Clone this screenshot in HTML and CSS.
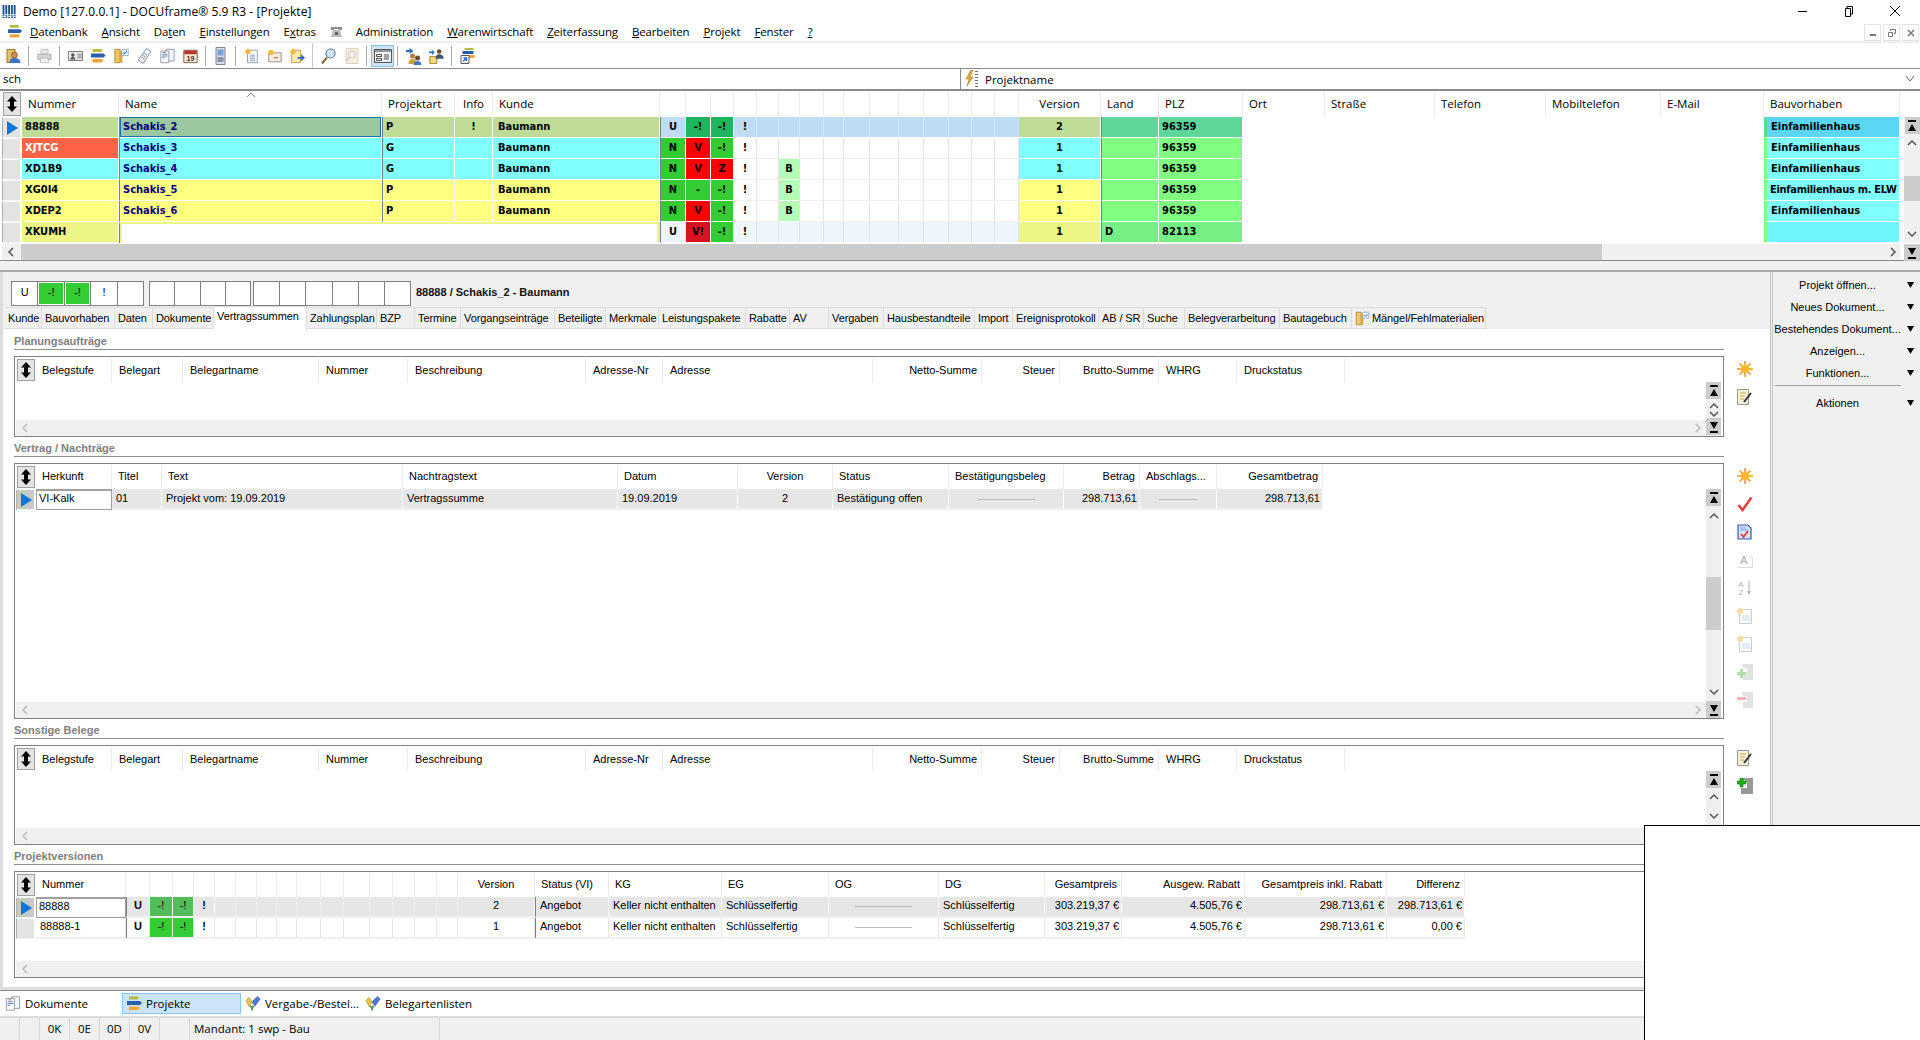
FILE: index.html
```html
<!DOCTYPE html>
<html lang="de">
<head>
  <meta charset="UTF-8">
  <title>DOCUframe</title>
  <link rel="stylesheet" href="styles.css">
</head>
<body>
  <svg class="defs" width="0" height="0">
    <symbol id="i-app" viewBox="0 0 16 14"><path fill="#1f4e8c" d="M0 0h2v14H0zM3 0h2v14H3zM6 0h2v14H6zM9 0h2v14H9zM12 0h2v14h-2z"/><path fill="#fff" d="M0 10h14v1H0zM0 12h14v1H0z"/><path fill="#1f4e8c" d="M1 10h1v1H1zM4 12h1v1H4zM7 10h1v1H7zM10 12h1v1h-1z"/></symbol>
    <symbol id="i-bars" viewBox="0 0 16 16"><path fill="#b4bc46" d="M2 1h9l1 1.500-1 1.500H2z"/><path fill="#2a5ea8" d="M0 5.500h13l2 2-2 2H0z"/><path fill="#eda63a" d="M2 11h9l2 1.500-2 2H2z"/></symbol>
    <symbol id="i-dbuser" viewBox="0 0 16 18"><path fill="#e4c060" stroke="#a07820" d="M1.500 2.500h8v13h-8z"/><circle cx="9" cy="8" r="3" fill="#c98d5a" stroke="#6e4a2a" stroke-width=".6"/><path fill="#3f74c4" d="M4 16c0-4 2-5 5-5s6 1 6 5z"/></symbol>
    <symbol id="i-print" viewBox="0 0 18 18"><path fill="#e6e6e6" stroke="#bbb" d="M5 1.500h8v5H5z"/><path fill="#d4d4d4" stroke="#b0b0b0" d="M1.500 7h15v6h-15z"/><path fill="#f2f2f2" stroke="#bbb" d="M4.500 11.500h9v5h-9z"/></symbol>
    <symbol id="i-card" viewBox="0 0 18 16"><path fill="#eee" stroke="#666" d="M1 3h16v10H1z"/><circle cx="6" cy="7" r="2" fill="#555"/><path fill="#555" d="M3 12c0-2 1-3 3-3s3 1 3 3z"/><path stroke="#777" d="M11 6h5M11 8h5M11 10h5"/></symbol>
    <symbol id="i-folder" viewBox="0 0 18 18"><path fill="#eec968" stroke="#b08a30" d="M1.500 1.500h6v15h-6z"/><path fill="#d8a83c" d="M7 3l3 1v13l-3-1z"/><path fill="#fff" stroke="#8aa6c8" d="M9.500 1.500h7v7h-7z"/><path fill="none" stroke="#2f6fb8" stroke-width="1.200" d="M11 5l1.500 1.500 2.500-3"/></symbol>
    <symbol id="i-tag" viewBox="0 0 16 18"><path fill="#eef0f4" stroke="#8b93a0" d="M10 1.500l4.500 3-8 12-5-3.500z"/><path stroke="#8b93a0" d="M5 10l3 2M6 8l3 2M7.500 6l3 2"/></symbol>
    <symbol id="i-docs" viewBox="0 0 18 18"><path fill="#f4f6fa" stroke="#8a94a6" d="M7.500 1.500h9v13h-9z"/><path fill="#fff" stroke="#8a94a6" d="M1.500 3.500h9v13h-9z"/><path stroke="#4f7dc0" d="M3 7h6M3 9h6M3 11h3"/><path stroke="#c05030" d="M4 5h3"/></symbol>
    <symbol id="i-phone" viewBox="0 0 12 18"><path fill="#d6dce6" stroke="#7c8696" d="M1.500 .500h9v17h-9z"/><path fill="#7ca4d8" d="M3 2.500h6v6H3z"/><path fill="#8a94a6" d="M3 10h6v5H3z"/></symbol>
    <symbol id="i-docstar" viewBox="0 0 18 18"><path fill="#fff" stroke="#8a94a6" d="M4.500 2.500h11v14h-11z"/><path stroke="#7f9cc8" d="M7 8h6M7 10h6M7 12h6M7 14h6"/><circle cx="5" cy="4" r="3" fill="#f6b93c"/></symbol>
    <symbol id="i-mailstar" viewBox="0 0 18 18"><path fill="#f6eedc" stroke="#8a8a8a" d="M2.500 5.500h14v10h-14z"/><path stroke="#b04040" d="M8 11h5"/><circle cx="5" cy="5" r="3" fill="#f6b93c"/></symbol>
    <symbol id="i-docgo" viewBox="0 0 18 18"><path fill="#fbeeb0" stroke="#b49a40" d="M2.500 2.500h10v14h-10z"/><circle cx="4" cy="4" r="3" fill="#f6b93c"/><path fill="#2a6fc9" d="M9 10h4V7l4.500 4-4.500 4v-3H9z"/></symbol>
    <symbol id="i-find" viewBox="0 0 16 18"><circle cx="10" cy="6.500" r="4.500" fill="#cfe4f8" stroke="#66788c" stroke-width="1.200"/><path stroke="#8a6a3a" stroke-width="2" d="M6.500 10.500L1.500 16.500"/></symbol>
    <symbol id="i-findoff" viewBox="0 0 16 18"><path fill="#f7efdd" stroke="#ddd2bc" d="M2.500 1.500h12v15h-12z"/><circle cx="8.500" cy="7.500" r="3.500" fill="#f3f3f3" stroke="#ccc"/><path stroke="#ccc" stroke-width="1.500" d="M6 10l-3 4"/></symbol>
    <symbol id="i-view" viewBox="0 0 18 16"><path fill="#f2f2f2" stroke="#555" d="M.500 1.500h17v13H.500z"/><path fill="#999" d="M1 2h16v2H1z"/><path fill="none" stroke="#555" d="M2.500 6.500h5v2h-5zM2.500 10.500h5v2h-5zM10 7h5M10 9h5M10 11h5"/></symbol>
    <symbol id="i-people" viewBox="0 0 16 18"><path fill="#2a6fc9" d="M0 3h4V1l4 3-4 3V5H0z"/><circle cx="7" cy="9" r="2.500" fill="#b07a4a"/><path fill="#caa040" d="M3 17c0-4 2-5 4-5s4 1 4 5z"/><circle cx="12" cy="11" r="2.500" fill="#6e4a2a"/><path fill="#3f74c4" d="M8 18c0-3 2-4 4-4s4 1 4 4z"/></symbol>
    <symbol id="i-peoplego" viewBox="0 0 18 18"><path fill="#2a6fc9" d="M0 4h4V2l3 3-3 3V6H0z"/><path fill="#f2d67a" stroke="#9c8030" d="M1.500 9.500h8v8h-8z"/><circle cx="12" cy="4" r="2.500" fill="#6e4a2a"/><path fill="#3f4f70" d="M8 12c0-4 2-5 4-5s5 1 5 5z"/></symbol>
    <symbol id="i-barslink" viewBox="0 0 16 18"><path fill="#b4bc46" d="M5 1h9v2H5z"/><path fill="#2a5ea8" d="M3 4h11v3H3z"/><path fill="#eda63a" d="M9 8h6v3H9z"/><path fill="#fff" stroke="#555" d="M1.500 8.500h8v8h-8z"/><path stroke="#2a6fc9" stroke-width="1.500" fill="none" d="M3.500 14.500l3-3M4 11h3v3"/></symbol>
    <symbol id="i-lightning" viewBox="0 0 14 18"><path fill="#e8a838" stroke="#9a6a20" stroke-width=".5" d="M6 0L1 9h3l-2 7 6-9H5l3-7z"/><path fill="#777" d="M10 1h3v1h-3zM10 4h3v1h-3zM10 7h3v1h-3zM10 10h3v1h-3zM10 13h3v1h-3zM10 16h3v1h-3z"/></symbol>
    <symbol id="i-updown" viewBox="0 0 12 18"><path fill="#000" d="M6 1l5 5.500H8v5h3L6 17l-5-5.500h3v-5H1z"/></symbol>
    <symbol id="i-cur" viewBox="0 0 14 16"><path fill="#0a78d8" d="M2 1l11 7-11 7z"/></symbol>
    <symbol id="i-first" viewBox="0 0 10 12"><path fill="#000" d="M1 0h8v2H1zM5 4l4 7H1z"/></symbol>
    <symbol id="i-last" viewBox="0 0 10 12"><path fill="#000" d="M1 10h8v2H1zM5 8L1 1h8z"/></symbol>
    <symbol id="i-star" viewBox="0 0 16 16"><path stroke="#f59a0c" stroke-width="1.500" d="M8 0v16M0 8h16M2.500 2.500l11 11M13.500 2.500l-11 11"/><circle cx="8" cy="8" r="4" fill="#fbb82c"/></symbol>
    <symbol id="i-note" viewBox="0 0 16 16"><path fill="#f6f0d8" stroke="#999" d="M.500 .500h11v15H.500z"/><path stroke="#c8a84c" d="M3 4h6M3 7h5M3 10h4"/><path stroke="#333" stroke-width="2" d="M7 13l7-9"/></symbol>
    <symbol id="i-check" viewBox="0 0 16 16"><path fill="none" stroke="#ee3b3b" stroke-width="2.500" d="M1.500 9l4 5L14.500 1.500"/></symbol>
    <symbol id="i-doccheck" viewBox="0 0 16 16"><path fill="#cfe3fa" stroke="#3b5aa8" stroke-width="1.200" d="M1 1h10l3 3v11H1z"/><path stroke="#7aa0d8" d="M3 4h6M3 6h8"/><path fill="none" stroke="#ee3b3b" stroke-width="1.800" d="M4 10l2.500 3L11 7"/></symbol>
    <symbol id="i-docoff" viewBox="0 0 16 16"><path fill="#fff" stroke="#ccc" d="M2.500 1.500h12v14h-12z"/><path stroke="#cdd8e8" d="M5 8h8M5 10h8M5 12h8"/><circle cx="3" cy="3" r="3" fill="#f8dca0"/></symbol>
    <symbol id="i-plusoff" viewBox="0 0 16 16"><path stroke="#c6c6c6" d="M5 1h11M6 3h10M10 5h6M10 7h6M10 9h6M6 11h10M6 13h10M6 15h10"/><path fill="#b4e0a8" d="M3 5h3v3h3v3H6v3H3v-3H0V8h3z"/></symbol>
    <symbol id="i-minusoff" viewBox="0 0 16 16"><path stroke="#c6c6c6" d="M5 1h11M6 3h10M10 5h6M10 7h6M10 9h6M6 11h10M6 13h10M6 15h10"/><path fill="#f6b4b8" d="M0 5h9v3H0z"/></symbol>
    <symbol id="i-plus" viewBox="0 0 16 16"><path stroke="#333" d="M5 1h11M8 3h8M10 5h6M10 7h6M10 9h6M4 11h12M4 13h12M4 15h12"/><path fill="#1cae1c" stroke="#0a7a0a" stroke-width=".6" d="M3 0h3v3h3v3H6v3H3V6H0V3h3z"/></symbol>
    <symbol id="i-gems" viewBox="0 0 18 18"><path fill="#e8c84c" stroke="#907818" stroke-width=".6" d="M1 6l3-4 4 5-3 6z"/><path fill="#4a78d8" stroke="#28468c" stroke-width=".6" d="M8 7l6-6 3 3-6 8z"/><path fill="#5cae5c" stroke="#2a6e2a" stroke-width=".6" d="M6 12l4 0-2 5z"/></symbol>
  </svg>

  <div class="titlebar">
    <svg class="app-ico"><use href="#i-app"/></svg>
    <span class="title-text">Demo [127.0.0.1] - DOCUframe® 5.9 R3 - [Projekte]</span>
    <div class="win-btns">
      <svg width="12" height="12"><path stroke="#000" d="M1 6.500h9"/></svg>
      <svg width="12" height="12"><path fill="none" stroke="#000" d="M2.500 3.500h5v8h-5zM4 3V1.500h5.500V9H8"/></svg>
      <svg width="12" height="12"><path stroke="#000" d="M1 1l10 10M11 1L1 11"/></svg>
    </div>
  </div>

  <div class="menubar">
    <svg class="menu-ico"><use href="#i-bars"/></svg>
    <span class="mi m-first"><u>D</u>atenbank</span>
    <span class="mi"><u>A</u>nsicht</span>
    <span class="mi">Da<u>t</u>en</span>
    <span class="mi"><u>E</u>instellungen</span>
    <span class="mi">E<u>x</u>tras</span>
    <svg class="mi-phone" width="13" height="13" viewBox="0 0 13 13"><path fill="#8a8f96" d="M1 2h11v3H9V4H4v1H1z"/><path fill="#b8bcc2" d="M3 5h7l2 7H1z"/><path fill="#666" d="M5 7h3v3H5z"/></svg>
    <span class="mi">Administration</span>
    <span class="mi"><u>W</u>arenwirtschaft</span>
    <span class="mi"><u>Z</u>eiterfassung</span>
    <span class="mi"><u>B</u>earbeiten</span>
    <span class="mi"><u>P</u>rojekt</span>
    <span class="mi"><u>F</u>enster</span>
    <span class="mi"><u>?</u></span>
    <div class="mdi-btns">
      <span class="mdi"><svg width="8" height="8"><path stroke="#777" stroke-width="2" d="M1 6h6"/></svg></span>
      <span class="mdi"><svg width="8" height="8"><path fill="none" stroke="#777" d="M.500 3.500h4v4h-4zM2.500 2V.500h5v4H6"/></svg></span>
      <span class="mdi"><svg width="8" height="8"><path stroke="#777" stroke-width="1.500" d="M1 1l6 6M7 1L1 7"/></svg></span>
    </div>
  </div>

  <div class="toolbar">
    <svg class="tb"><use href="#i-dbuser"/></svg>
    <span class="sep"></span>
    <svg class="tb"><use href="#i-print"/></svg>
    <span class="sep"></span>
    <svg class="tb"><use href="#i-card"/></svg>
    <svg class="tb"><use href="#i-bars"/></svg>
    <svg class="tb"><use href="#i-folder"/></svg>
    <svg class="tb"><use href="#i-tag"/></svg>
    <svg class="tb"><use href="#i-docs"/></svg>
    <svg class="tb" viewBox="0 0 18 18"><path fill="#f3ead8" stroke="#6a5030" d="M1.500 2.500h15v14h-15z"/><path fill="#b8352e" d="M2 3h14v4H2z"/><text x="9" y="15" font-family="Liberation Sans" font-size="8" font-weight="bold" text-anchor="middle" fill="#333">19</text></svg>
    <span class="sep sep-n"></span>
    <svg class="tb"><use href="#i-phone"/></svg>
    <span class="sep"></span>
    <svg class="tb"><use href="#i-docstar"/></svg>
    <svg class="tb"><use href="#i-mailstar"/></svg>
    <svg class="tb"><use href="#i-docgo"/></svg>
    <span class="sep sep-tall"></span>
    <svg class="tb"><use href="#i-find"/></svg>
    <svg class="tb"><use href="#i-findoff"/></svg>
    <span class="sep"></span>
    <span class="tb-on"><svg class="tb-in"><use href="#i-view"/></svg></span>
    <span class="sep"></span>
    <svg class="tb"><use href="#i-people"/></svg>
    <svg class="tb"><use href="#i-peoplego"/></svg>
    <span class="sep"></span>
    <svg class="tb"><use href="#i-barslink"/></svg>
  </div>

  <div class="searchrow">
    <div class="search-input">sch</div>
    <div class="search-combo">
      <svg class="combo-ico"><use href="#i-lightning"/></svg>
      <span>Projektname</span>
      <svg class="combo-arrow" width="10" height="8"><path fill="none" stroke="#666" d="M1 1l4 5 4-5"/></svg>
    </div>
  </div>

  <div class="topgrid">
    <div class="t-cols t-head">
      <div class="updown"><svg><use href="#i-updown"/></svg></div>
      <div class="th">Nummer</div>
      <div class="th th-sort">Name<svg class="sort-ico" width="10" height="5"><path fill="none" stroke="#888" d="M1 5l4-4 4 4"/></svg></div>
      <div class="th">Projektart</div>
      <div class="th mid">Info</div>
      <div class="th">Kunde</div>
      <div class="th"></div><div class="th"></div><div class="th"></div><div class="th"></div><div class="th"></div><div class="th"></div>
      <div class="th"></div><div class="th"></div><div class="th"></div><div class="th"></div><div class="th"></div><div class="th"></div><div class="th"></div><div class="th"></div><div class="th"></div>
      <div class="th mid">Version</div>
      <div class="th">Land</div>
      <div class="th">PLZ</div>
      <div class="th">Ort</div>
      <div class="th">Straße</div>
      <div class="th">Telefon</div>
      <div class="th">Mobiltelefon</div>
      <div class="th">E-Mail</div>
      <div class="th">Bauvorhaben</div>
    </div>
    <div class="t-body">
      <div class="t-rows">
        <div class="t-cols t-row">
          <div class="rh rh-cur"><svg><use href="#i-cur"/></svg></div>
          <div class="c bg-sel">88888</div>
          <div class="c name bg-focus dl">Schakis_2</div>
          <div class="c bg-sel dl">P</div>
          <div class="c bg-sel mid">!</div>
          <div class="c kd bg-sel">Baumann</div>
          <div class="c bg-blue mid dl">U</div>
          <div class="c bg-dgrn mid">-!</div>
          <div class="c bg-dgrn mid">-!</div>
          <div class="c bg-blue mid">!</div>
          <div class="c bg-blue"></div><div class="c bg-blue"></div>
          <div class="c bg-blue"></div><div class="c bg-blue"></div><div class="c bg-blue"></div><div class="c bg-blue"></div><div class="c bg-blue"></div><div class="c bg-blue"></div><div class="c bg-blue"></div><div class="c bg-blue"></div><div class="c bg-blue"></div>
          <div class="c bg-sel mid">2</div>
          <div class="c bg-mint dl"></div>
          <div class="c bg-mint">96359</div>
          <div class="blank"></div>
          <div class="c bau bg-sky edge-mint">Einfamilienhaus</div>
        </div>
        <div class="t-cols t-row">
          <div class="rh"></div>
          <div class="c bg-tom">XJTCG</div>
          <div class="c name bg-cyan dl">Schakis_3</div>
          <div class="c bg-cyan dl">G</div>
          <div class="c bg-cyan"></div>
          <div class="c kd bg-cyan">Baumann</div>
          <div class="c bg-grn mid dl">N</div>
          <div class="c bg-red mid">V</div>
          <div class="c bg-grn mid">-!</div>
          <div class="c gl mid">!</div>
          <div class="c gl"></div><div class="c gl"></div>
          <div class="c gl"></div><div class="c gl"></div><div class="c gl"></div><div class="c gl"></div><div class="c gl"></div><div class="c gl"></div><div class="c gl"></div><div class="c gl"></div><div class="c gl"></div>
          <div class="c bg-cyan mid">1</div>
          <div class="c bg-lime dl"></div>
          <div class="c bg-lime">96359</div>
          <div class="blank"></div>
          <div class="c bau bg-cyan edge-lime">Einfamilienhaus</div>
        </div>
        <div class="t-cols t-row">
          <div class="rh"></div>
          <div class="c bg-cyan">XD1B9</div>
          <div class="c name bg-cyan dl">Schakis_4</div>
          <div class="c bg-cyan dl">G</div>
          <div class="c bg-cyan"></div>
          <div class="c kd bg-cyan">Baumann</div>
          <div class="c bg-grn mid dl">N</div>
          <div class="c bg-red mid">V</div>
          <div class="c bg-red mid">Z</div>
          <div class="c gl mid">!</div>
          <div class="c gl"></div><div class="c bg-pale mid">B</div>
          <div class="c gl"></div><div class="c gl"></div><div class="c gl"></div><div class="c gl"></div><div class="c gl"></div><div class="c gl"></div><div class="c gl"></div><div class="c gl"></div><div class="c gl"></div>
          <div class="c bg-cyan mid">1</div>
          <div class="c bg-lime dl"></div>
          <div class="c bg-lime">96359</div>
          <div class="blank"></div>
          <div class="c bau bg-cyan edge-lime">Einfamilienhaus</div>
        </div>
        <div class="t-cols t-row">
          <div class="rh"></div>
          <div class="c bg-yel">XG0I4</div>
          <div class="c name bg-yel dl">Schakis_5</div>
          <div class="c bg-yel dl">P</div>
          <div class="c bg-yel"></div>
          <div class="c kd bg-yel">Baumann</div>
          <div class="c bg-grn mid dl">N</div>
          <div class="c bg-grn mid">-</div>
          <div class="c bg-grn mid">-!</div>
          <div class="c gl mid">!</div>
          <div class="c gl"></div><div class="c bg-pale mid">B</div>
          <div class="c gl"></div><div class="c gl"></div><div class="c gl"></div><div class="c gl"></div><div class="c gl"></div><div class="c gl"></div><div class="c gl"></div><div class="c gl"></div><div class="c gl"></div>
          <div class="c bg-yel mid">1</div>
          <div class="c bg-lime dl"></div>
          <div class="c bg-lime">96359</div>
          <div class="blank"></div>
          <div class="c bau bau-long bg-cyan edge-lime">Einfamilienhaus m. ELW</div>
        </div>
        <div class="t-cols t-row">
          <div class="rh"></div>
          <div class="c bg-yel">XDEP2</div>
          <div class="c name bg-yel dl">Schakis_6</div>
          <div class="c bg-yel dl">P</div>
          <div class="c bg-yel"></div>
          <div class="c kd bg-yel">Baumann</div>
          <div class="c bg-grn mid dl">N</div>
          <div class="c bg-red mid">V</div>
          <div class="c bg-grn mid">-!</div>
          <div class="c gl mid">!</div>
          <div class="c gl"></div><div class="c bg-pale mid">B</div>
          <div class="c gl"></div><div class="c gl"></div><div class="c gl"></div><div class="c gl"></div><div class="c gl"></div><div class="c gl"></div><div class="c gl"></div><div class="c gl"></div><div class="c gl"></div>
          <div class="c bg-yel mid">1</div>
          <div class="c bg-lime dl"></div>
          <div class="c bg-lime">96359</div>
          <div class="blank"></div>
          <div class="c bau bg-cyan edge-lime">Einfamilienhaus</div>
        </div>
        <div class="t-cols t-row">
          <div class="rh"></div>
          <div class="c bg-olive">XKUMH</div>
          <div class="c editing dl"></div>
          <div class="c bg-ice mid dl">U</div>
          <div class="c bg-crim mid">V!</div>
          <div class="c bg-grn mid">-!</div>
          <div class="c bg-ice mid">!</div>
          <div class="c bg-ice"></div><div class="c bg-ice"></div>
          <div class="c bg-ice"></div><div class="c bg-ice"></div><div class="c bg-ice"></div><div class="c bg-ice"></div><div class="c bg-ice"></div><div class="c bg-ice"></div><div class="c bg-ice"></div><div class="c bg-ice"></div><div class="c bg-ice"></div>
          <div class="c bg-olive mid">1</div>
          <div class="c bg-spring dl">D</div>
          <div class="c bg-spring">82113</div>
          <div class="blank"></div>
          <div class="c bau bg-aqua edge-lime"></div>
        </div>
      </div>
      <div class="vs vs-top">
        <span class="vs-btn"><svg width="10" height="12"><use href="#i-first"/></svg></span>
        <svg class="vs-arrow" width="10" height="7"><path fill="none" stroke="#555" stroke-width="1.500" d="M1 6l4-4 4 4"/></svg>
        <span class="vs-thumb"></span>
        <svg class="vs-arrow vs-down" width="10" height="7"><path fill="none" stroke="#555" stroke-width="1.500" d="M1 1l4 4 4-4"/></svg>
      </div>
    </div>
    <div class="t-hscroll">
      <div class="hs">
        <svg class="hs-left" width="7" height="10"><path fill="none" stroke="#555" stroke-width="1.500" d="M6 1L2 5l4 4"/></svg>
        <span class="hs-thumb"></span>
        <svg class="hs-right" width="7" height="10"><path fill="none" stroke="#555" stroke-width="1.500" d="M1 1l4 4-4 4"/></svg>
      </div>
      <span class="vs-btn"><svg width="10" height="12"><use href="#i-last"/></svg></span>
    </div>
  </div>

  <div class="split-top"></div>

  <div class="workspace">
    <div class="work">
      <div class="statusline">
        <div class="sgroup sg-a">
          <span class="sb">U</span><span class="sb sb-grn">-!</span><span class="sb sb-grn">-!</span><span class="sb">!</span><span class="sb"></span>
        </div>
        <div class="sgroup sg-b">
          <span class="sb"></span><span class="sb"></span><span class="sb"></span><span class="sb"></span>
        </div>
        <div class="sgroup sg-c">
          <span class="sb"></span><span class="sb"></span><span class="sb"></span><span class="sb"></span><span class="sb"></span><span class="sb"></span>
        </div>
        <span class="record">88888 / Schakis_2 - Baumann</span>
      </div>
      <div class="tabs">
        <span class="tab">Kunde</span>
        <span class="tab">Bauvorhaben</span>
        <span class="tab">Daten</span>
        <span class="tab">Dokumente</span>
        <span class="tab tab-on">Vertragssummen</span>
        <span class="tab">Zahlungsplan</span>
        <span class="tab">BZP</span>
        <span class="tab">Termine</span>
        <span class="tab">Vorgangseinträge</span>
        <span class="tab">Beteiligte</span>
        <span class="tab">Merkmale</span>
        <span class="tab">Leistungspakete</span>
        <span class="tab">Rabatte</span>
        <span class="tab">AV</span>
        <span class="tab">Vergaben</span>
        <span class="tab">Hausbestandteile</span>
        <span class="tab">Import</span>
        <span class="tab">Ereignisprotokoll</span>
        <span class="tab">AB / SR</span>
        <span class="tab">Suche</span>
        <span class="tab">Belegverarbeitung</span>
        <span class="tab">Bautagebuch</span>
        <span class="tab tab-ico"><svg width="15" height="17"><use href="#i-folder"/></svg>Mängel/Fehlmaterialien</span>
      </div>

      <div class="panel">
        <div class="sec sec-1">
          <div class="sec-title">Planungsaufträge</div>
          <div class="box">
            <div class="grid-a gh">
              <div class="updown"><svg><use href="#i-updown"/></svg></div>
              <div class="gth">Belegstufe</div><div class="gth">Belegart</div><div class="gth">Belegartname</div><div class="gth">Nummer</div><div class="gth">Beschreibung</div><div class="gth">Adresse-Nr</div><div class="gth">Adresse</div>
              <div class="gth r">Netto-Summe</div><div class="gth r">Steuer</div><div class="gth r">Brutto-Summe</div><div class="gth">WHRG</div><div class="gth">Druckstatus</div>
            </div>
            <div class="box-body">
              <div class="box-left">
                <div class="box-rows"></div>
                <div class="hs hs-off">
                  <svg class="hs-left" width="7" height="10"><path fill="none" stroke="#bbb" stroke-width="1.500" d="M6 1L2 5l4 4"/></svg>
                  <svg class="hs-right" width="7" height="10"><path fill="none" stroke="#bbb" stroke-width="1.500" d="M1 1l4 4-4 4"/></svg>
                </div>
              </div>
              <div class="vs vs-tight">
                <span class="vs-btn"><svg width="10" height="12"><use href="#i-first"/></svg></span>
                <svg class="vs-arrow" width="10" height="7"><path fill="none" stroke="#555" stroke-width="1.500" d="M1 6l4-4 4 4"/></svg>
                <svg class="vs-arrow vs-down" width="10" height="7"><path fill="none" stroke="#555" stroke-width="1.500" d="M1 1l4 4 4-4"/></svg>
                <span class="vs-btn"><svg width="10" height="12"><use href="#i-last"/></svg></span>
              </div>
            </div>
          </div>
          <div class="tools">
            <svg><use href="#i-star"/></svg>
            <svg><use href="#i-note"/></svg>
          </div>
        </div>

        <div class="sec sec-2">
          <div class="sec-title">Vertrag / Nachträge</div>
          <div class="box">
            <div class="grid-b gh">
              <div class="updown"><svg><use href="#i-updown"/></svg></div>
              <div class="gth">Herkunft</div><div class="gth">Titel</div><div class="gth">Text</div><div class="gth">Nachtragstext</div><div class="gth">Datum</div><div class="gth mid">Version</div><div class="gth">Status</div><div class="gth">Bestätigungsbeleg</div><div class="gth r">Betrag</div><div class="gth">Abschlags...</div><div class="gth r">Gesamtbetrag</div>
            </div>
            <div class="box-body">
              <div class="box-left">
                <div class="box-rows">
                  <div class="grid-b gr gr-on">
                    <div class="rh rh-dark"><svg><use href="#i-cur"/></svg></div>
                    <div class="gc gc-cur">VI-Kalk</div><div class="gc">01</div><div class="gc">Projekt vom: 19.09.2019</div><div class="gc">Vertragssumme</div><div class="gc">19.09.2019</div><div class="gc mid">2</div><div class="gc">Bestätigung offen</div><div class="gc mid"><span class="dash"></span></div><div class="gc r">298.713,61</div><div class="gc mid"><span class="dash dash-s"></span></div><div class="gc r">298.713,61</div>
                  </div>
                </div>
                <div class="hs hs-off">
                  <svg class="hs-left" width="7" height="10"><path fill="none" stroke="#bbb" stroke-width="1.500" d="M6 1L2 5l4 4"/></svg>
                  <svg class="hs-right" width="7" height="10"><path fill="none" stroke="#bbb" stroke-width="1.500" d="M1 1l4 4-4 4"/></svg>
                </div>
              </div>
              <div class="vs vs-long">
                <span class="vs-btn"><svg width="10" height="12"><use href="#i-first"/></svg></span>
                <svg class="vs-arrow" width="10" height="7"><path fill="none" stroke="#555" stroke-width="1.500" d="M1 6l4-4 4 4"/></svg>
                <span class="vs-thumb"></span>
                <svg class="vs-arrow vs-down" width="10" height="7"><path fill="none" stroke="#555" stroke-width="1.500" d="M1 1l4 4 4-4"/></svg>
                <span class="vs-btn"><svg width="10" height="12"><use href="#i-last"/></svg></span>
              </div>
            </div>
          </div>
          <div class="tools">
            <svg><use href="#i-star"/></svg>
            <svg><use href="#i-check"/></svg>
            <svg><use href="#i-doccheck"/></svg>
            <svg viewBox="0 0 16 16"><text x="7" y="12" font-family="Liberation Sans" font-size="11" text-anchor="middle" fill="#aaa">A</text><path fill="none" stroke="#ddd" d="M.500 15.500h15V6l-3-3"/></svg>
            <svg viewBox="0 0 16 16"><text x="4" y="7" font-family="Liberation Sans" font-size="8" text-anchor="middle" fill="#b4b4b4">A</text><text x="4" y="15" font-family="Liberation Sans" font-size="8" text-anchor="middle" fill="#b4b4b4">Z</text><path stroke="#b4b4b4" d="M12 1v13"/><path fill="#b4b4b4" d="M12 15l-2-4h4z"/></svg>
            <svg><use href="#i-docoff"/></svg>
            <svg><use href="#i-docoff"/></svg>
            <svg><use href="#i-plusoff"/></svg>
            <svg><use href="#i-minusoff"/></svg>
          </div>
        </div>

        <div class="sec sec-3">
          <div class="sec-title">Sonstige Belege</div>
          <div class="box">
            <div class="grid-a gh">
              <div class="updown"><svg><use href="#i-updown"/></svg></div>
              <div class="gth">Belegstufe</div><div class="gth">Belegart</div><div class="gth">Belegartname</div><div class="gth">Nummer</div><div class="gth">Beschreibung</div><div class="gth">Adresse-Nr</div><div class="gth">Adresse</div>
              <div class="gth r">Netto-Summe</div><div class="gth r">Steuer</div><div class="gth r">Brutto-Summe</div><div class="gth">WHRG</div><div class="gth">Druckstatus</div>
            </div>
            <div class="box-body">
              <div class="box-left">
                <div class="box-rows"></div>
                <div class="hs hs-off">
                  <svg class="hs-left" width="7" height="10"><path fill="none" stroke="#bbb" stroke-width="1.500" d="M6 1L2 5l4 4"/></svg>
                </div>
              </div>
              <div class="vs">
                <span class="vs-btn"><svg width="10" height="12"><use href="#i-first"/></svg></span>
                <svg class="vs-arrow" width="10" height="7"><path fill="none" stroke="#555" stroke-width="1.500" d="M1 6l4-4 4 4"/></svg>
                <svg class="vs-arrow vs-mid" width="10" height="7"><path fill="none" stroke="#555" stroke-width="1.500" d="M1 1l4 4 4-4"/></svg>
              </div>
            </div>
          </div>
          <div class="tools">
            <svg><use href="#i-note"/></svg>
            <svg><use href="#i-plus"/></svg>
          </div>
        </div>

        <div class="sec sec-4">
          <div class="sec-title">Projektversionen</div>
          <div class="box">
            <div class="grid-c gh">
              <div class="updown"><svg><use href="#i-updown"/></svg></div>
              <div class="gth">Nummer</div>
              <div class="gth"></div><div class="gth"></div><div class="gth"></div><div class="gth"></div><div class="gth"></div><div class="gth"></div><div class="gth"></div><div class="gth"></div><div class="gth"></div><div class="gth"></div><div class="gth"></div><div class="gth"></div><div class="gth"></div><div class="gth"></div><div class="gth"></div>
              <div class="gth mid">Version</div><div class="gth">Status (VI)</div><div class="gth">KG</div><div class="gth">EG</div><div class="gth">OG</div><div class="gth">DG</div><div class="gth r">Gesamtpreis</div><div class="gth r">Ausgew. Rabatt</div><div class="gth r">Gesamtpreis inkl. Rabatt</div><div class="gth r">Differenz</div>
            </div>
            <div class="box-body">
              <div class="box-left">
                <div class="box-rows">
                  <div class="grid-c gr gr-on">
                    <div class="rh rh-dark"><svg><use href="#i-cur"/></svg></div>
                    <div class="gc gc-cur">88888</div>
                    <div class="gc mid gb dl">U</div><div class="gc mid gr-dgrn">-!</div><div class="gc mid gr-dgrn">-!</div><div class="gc mid gb">!</div>
                    <div class="gc gq"></div><div class="gc gq"></div><div class="gc gq"></div><div class="gc gq"></div><div class="gc gq"></div><div class="gc gq"></div><div class="gc gq"></div><div class="gc gq"></div><div class="gc gq"></div><div class="gc gq"></div><div class="gc gq"></div>
                    <div class="gc mid">2</div><div class="gc dl">Angebot</div><div class="gc">Keller nicht enthalten</div><div class="gc">Schlüsselfertig</div><div class="gc mid"><span class="dash"></span></div><div class="gc">Schlüsselfertig</div><div class="gc r">303.219,37 €</div><div class="gc r">4.505,76 €</div><div class="gc r">298.713,61 €</div><div class="gc r">298.713,61 €</div>
                  </div>
                  <div class="grid-c gr">
                    <div class="rh"></div>
                    <div class="gc">88888-1</div>
                    <div class="gc mid gb dl">U</div><div class="gc mid gr-grn">-!</div><div class="gc mid gr-grn">-!</div><div class="gc mid gb">!</div>
                    <div class="gc"></div><div class="gc"></div><div class="gc"></div><div class="gc"></div><div class="gc"></div><div class="gc"></div><div class="gc"></div><div class="gc"></div><div class="gc"></div><div class="gc"></div><div class="gc"></div>
                    <div class="gc mid">1</div><div class="gc dl">Angebot</div><div class="gc">Keller nicht enthalten</div><div class="gc">Schlüsselfertig</div><div class="gc mid"><span class="dash"></span></div><div class="gc">Schlüsselfertig</div><div class="gc r">303.219,37 €</div><div class="gc r">4.505,76 €</div><div class="gc r">298.713,61 €</div><div class="gc r">0,00 €</div>
                  </div>
                </div>
                <div class="hs hs-off">
                  <svg class="hs-left" width="7" height="10"><path fill="none" stroke="#bbb" stroke-width="1.500" d="M6 1L2 5l4 4"/></svg>
                </div>
              </div>
            </div>
          </div>
        </div>
      </div>
    </div>

    <div class="side">
      <div class="side-btn">Projekt öffnen...<svg class="tri" width="7" height="6"><path d="M0 0h7L3.500 6z"/></svg></div>
      <div class="side-btn">Neues Dokument...<svg class="tri" width="7" height="6"><path d="M0 0h7L3.500 6z"/></svg></div>
      <div class="side-btn">Bestehendes Dokument...<svg class="tri" width="7" height="6"><path d="M0 0h7L3.500 6z"/></svg></div>
      <div class="side-btn">Anzeigen...<svg class="tri" width="7" height="6"><path d="M0 0h7L3.500 6z"/></svg></div>
      <div class="side-btn">Funktionen...<svg class="tri" width="7" height="6"><path d="M0 0h7L3.500 6z"/></svg></div>
      <div class="side-sep"></div>
      <div class="side-btn">Aktionen<svg class="tri" width="7" height="6"><path d="M0 0h7L3.500 6z"/></svg></div>
    </div>
  </div>

  <div class="split-bottom"></div>

  <div class="doctabs">
    <span class="dt"><svg><use href="#i-docs"/></svg>Dokumente</span>
    <span class="dt dt-on"><svg><use href="#i-bars"/></svg>Projekte</span>
    <span class="dt dt-v"><svg><use href="#i-gems"/></svg>Vergabe-/Bestel...</span>
    <span class="dt dt-b"><svg><use href="#i-gems"/></svg>Belegartenlisten</span>
  </div>

  <div class="statusbar">
    <span class="sbar sbar-a"></span>
    <span class="sbar sbar-a"></span>
    <span class="sbar sbar-n">0K</span>
    <span class="sbar sbar-n">0E</span>
    <span class="sbar sbar-n">0D</span>
    <span class="sbar sbar-n">0V</span>
    <span class="sbar sbar-n"></span>
    <span class="sbar sbar-m">Mandant: 1 swp - Bau</span>
  </div>

  <div class="overlay"></div>
</body>
</html>
```
FILE: styles.css
```css
html, body {
  margin: 0;
  padding: 0;
  height: 1040px;
  overflow: hidden;
  background: #fff;
  font-family: "Liberation Sans", Arial, sans-serif;
  font-size: 11px;
  color: #000;
}

body {
  display: flex;
  flex-direction: column;
  position: relative;
}

svg {
  display: block;
  flex: none;
}

.defs {
  position: absolute;
}

/* window chrome */
.titlebar {
  height: 22px;
  display: flex;
  align-items: center;
  padding-left: 2px;
  font-family: "Open Sans", sans-serif;
  font-size: 12px;
}

.app-ico {
  width: 16px;
  height: 13px;
  margin-right: 5px;
}

.title-text {
  letter-spacing: 0.07px;
}

.win-btns {
  margin-left: auto;
  display: flex;
  gap: 34px;
  padding-right: 19px;
}

.menubar {
  height: 19px;
  display: flex;
  align-items: center;
  padding: 2px 0 0 8px;
  box-sizing: content-box;
  margin-top: -2px;
  font-family: "Open Sans", sans-serif;
  font-size: 11.500px;
  letter-spacing: -0.15px;
  border-bottom: 2px solid #f0f0f0;
}

.menu-ico {
  width: 15px;
  height: 15px;
}

.mi {
  margin-right: 14px;
  white-space: nowrap;
}

.m-first {
  margin-left: 7px;
}

.mi-phone {
  margin-right: 13px;
}

.mdi-btns {
  margin-left: auto;
  display: flex;
  gap: 2px;
  padding-right: 1px;
  align-self: flex-end;
}

.mdi {
  width: 17px;
  height: 17px;
  border: 1px solid #e4e4e4;
  box-sizing: border-box;
  display: flex;
  align-items: center;
  justify-content: center;
}

.toolbar {
  height: 25px;
  display: flex;
  align-items: center;
  padding-left: 2px;
}

.tb {
  width: 16px;
  height: 18px;
  padding: 0 3.500px;
}

.sep {
  width: 1px;
  height: 20px;
  background: #a8a8a8;
  margin: 0 4px 0 3px;
}

.sep-n {
  margin-right: 3px;
}

.sep-tall {
  height: 25px;
  background: #c8c8c8;
}

.tb-on {
  width: 23px;
  height: 22px;
  box-sizing: border-box;
  background: #cce4f7;
  border: 1px solid #8ec1ea;
  display: flex;
  align-items: center;
  justify-content: center;
}

.tb-in {
  width: 18px;
  height: 16px;
}

.searchrow {
  height: 23px;
  box-sizing: border-box;
  display: flex;
  border-top: 1px solid #8a8a8a;
  border-bottom: 2px solid #8a8a8a;
  font-family: "Open Sans", sans-serif;
  font-size: 11.500px;
}

.search-input {
  width: 960px;
  box-sizing: border-box;
  padding-left: 3px;
  line-height: 20px;
}

.search-combo {
  flex: 1;
  display: flex;
  align-items: center;
  border-left: 1px solid #8a8a8a;
  padding-left: 4px;
  gap: 6px;
}

.combo-ico {
  width: 14px;
  height: 18px;
}

.combo-arrow {
  margin-left: auto;
  margin-right: 5px;
}

/* top grid */
.topgrid {
  height: 169px;
  padding-left: 2px;
  border-bottom: 1px solid #8a8a8a;
}

.t-cols {
  display: grid;
  width: 1898px;
  grid-template-columns: 20px 97px 263px 73px 38px 167px 26px 25px 23px 23px 22px 21px 24px 20px 26px 29px 25px 25px 23px 23px 24px 82px 58px 84px 82px 110px 111px 115px 103px 136px;
}

.t-head {
  height: 26px;
  font-family: "Open Sans", sans-serif;
  font-size: 11.500px;
}

.updown {
  margin: 1px;
  background: #e3e3e3;
  border: 1px solid #a0a0a0;
  box-sizing: border-box;
  display: flex;
  align-items: center;
  justify-content: center;
}

.updown svg {
  width: 12px;
  height: 18px;
}

.th {
  padding-left: 6px;
  line-height: 26px;
  border-right: 1px solid #ececec;
  position: relative;
  white-space: nowrap;
}

.th-sort .sort-ico {
  position: absolute;
  top: 1px;
  left: 127px;
}

.mid {
  text-align: center;
  padding-left: 0;
  padding-right: 0;
}

.t-body {
  display: flex;
  height: 126px;
}

.t-rows {
  width: 1898px;
}

.t-row {
  height: 21px;
  font-family: "DejaVu Sans Condensed", "Liberation Sans", sans-serif;
  font-size: 11px;
  font-weight: bold;
}

.rh {
  background: #e3e3e3;
  border: 1px solid #f4f4f4;
  border-left: 1px solid #b0b0b0;
  border-top-color: #fff;
  border-right: 2px solid #fff;
  box-sizing: border-box;
  display: flex;
  align-items: center;
  justify-content: center;
}

.rh svg {
  width: 14px;
  height: 16px;
}

.c {
  padding-left: 3px;
  line-height: 19px;
  border-bottom: 1px solid #fff;
  border-right: 1px solid #fff;
  white-space: nowrap;
  overflow: hidden;
}

.c.mid {
  padding-left: 0;
}

.c.kd {
  padding-left: 5px;
}

.dl {
  border-left: 1px solid #6f7f8f;
}

.name {
  color: #000080;
}

.gl {
  border-right-color: #e4e4e4;
  border-bottom-color: #f0f0f0;
}

.t-row .blank {
  grid-column: 25 / span 5;
}

.bau {
  padding-left: 4px;
}

.bau-long {
  padding-left: 3px;
  letter-spacing: -0.3px;
}

.bg-sel { background: #bedc96; }
.bg-focus { background: #9bc89f; box-shadow: inset 0 0 0 1px #1f6fa8; }
.bg-blue { background: #bfdcf5; border-right-color: #d8e8f6; }
.bg-dgrn { background: #1fb45f; }
.bg-mint { background: #5dd89a; }
.bg-sky { background: #5cd6f5; }
.bg-tom { background: #ff6347; color: #fff; }
.bg-cyan { background: #80ffff; }
.bg-yel { background: #ffff80; }
.bg-grn { background: #33cc33; }
.bg-red { background: #ff0000; }
.bg-crim { background: #d9121f; }
.bg-pale { background: #b3ffb3; border-right-color: #e4e4e4; }
.bg-lime { background: #80ff80; }
.bg-olive { background: #edf585; }
.bg-ice { background: #eef5fb; border-right-color: #e4e4e4; }
.bg-spring { background: #76f084; }
.bg-aqua { background: #70f5fb; }

.edge-mint { border-left: 3px solid #5dd89a; }
.edge-lime { border-left: 3px solid #80ff80; }

.editing {
  grid-column: span 4;
  background: #fff;
  border: 0;
  border-top: 2px solid #edf585;
  border-left: 1px solid #6f7f8f;
  border-right: 3px solid #edf585;
  padding: 0;
  box-shadow: inset 2px 0 0 #edf585;
}

.vs {
  width: 15px;
  background: #f0f0f0;
  display: flex;
  flex-direction: column;
  align-items: center;
  margin-left: 1px;
  margin-right: 2px;
  flex: none;
}

.vs-top {
  width: 16px;
  margin-left: 4px;
  margin-right: 0;
}

.vs-btn {
  display: flex;
  align-items: center;
  justify-content: center;
  width: 15px;
  height: 17px;
  background: #cccccc;
  flex: none;
}

.vs-arrow {
  margin-top: 5px;
}

.vs-down {
  margin-top: auto;
  margin-bottom: 5px;
}

.vs-tight .vs-arrow {
  margin-top: 3px;
  margin-bottom: 0;
}

.vs-tight .vs-down {
  margin-top: 2px;
}

.vs-mid {
  margin-top: 13px;
}

.vs-thumb {
  width: 100%;
  height: 25px;
  background: #cccccc;
  margin-top: 30px;
}

.vs-long .vs-arrow {
  margin-top: 6px;
}

.vs-long .vs-down {
  margin-top: auto;
}

.vs-long .vs-thumb {
  height: 53px;
  margin-top: 58px;
}

.t-hscroll {
  height: 16px;
  display: flex;
  margin-top: 1px;
}

.hs {
  height: 16px;
  width: 1898px;
  background: #f0f0f0;
  display: flex;
  align-items: center;
  flex: none;
}

.hs-thumb {
  width: 1581px;
  height: 100%;
  background: #cccccc;
  margin-left: 7px;
}

.hs-left {
  margin-left: 5px;
}

.hs-right {
  margin-left: auto;
  margin-right: 3px;
}

.t-hscroll .vs-btn {
  margin-left: 4px;
  width: 16px;
}

.split-top {
  height: 9px;
  background: #f0f0f0;
  border-bottom: 2px solid #a8a8a8;
}

/* workspace */
.workspace {
  height: 715px;
  display: flex;
}

.work {
  flex: 1;
  min-width: 0;
  display: flex;
  flex-direction: column;
  background: #f0f0f0;
  border-left: 3px solid #dcdcdc;
}

.statusline {
  height: 34px;
  box-sizing: border-box;
  padding: 9px 0 0 8px;
  display: flex;
}

.sgroup {
  display: flex;
  height: 25px;
  background: #fff;
  border: 1px solid #808080;
  box-sizing: border-box;
}

.sg-a { width: 133px; }
.sg-b { width: 102px; margin-left: 5px; }
.sg-c { width: 158px; margin-left: 2px; }

.sb {
  flex: 1;
  text-align: center;
  line-height: 21px;
  border-right: 1px solid #808080;
}

.sb:last-child {
  border-right: 0;
}

.sb-grn {
  background: #33cc33;
  box-shadow: inset 0 0 0 1px #fff;
}

.record {
  font-weight: bold;
  line-height: 23px;
  margin-left: 5px;
  color: #111;
}

.tabs {
  height: 23px;
  display: grid;
  grid-template-columns: 37px 73px 38px 61px 93px 70px 38px 46px 94px 51px 53px 87px 44px 39px 55px 91px 38px 86px 45px 41px 95px 72px 134px;
  margin-left: 2px;
  align-items: end;
  letter-spacing: -0.1px;
}

.tab {
  height: 22px;
  box-sizing: border-box;
  background: #f0f0f0;
  border: 1px solid #dcdcdc;
  border-left: 0;
  line-height: 21px;
  padding-left: 3px;
  white-space: nowrap;
}

.tab-on {
  height: 24px;
  background: #fff;
  border-bottom: 0;
  line-height: 18px;
  margin-bottom: -1px;
  position: relative;
}

.tab-ico {
  display: flex;
  align-items: center;
  gap: 2px;
}

.panel {
  height: 658px;
  box-sizing: border-box;
  background: #fff;
  padding: 6px 0 0 11px;
}

.sec {
  display: grid;
  grid-template-columns: 1710px auto;
  margin-bottom: 5px;
}

.sec-title {
  grid-column: 1 / 3;
  width: 1710px;
  height: 15px;
  box-sizing: border-box;
  font-weight: bold;
  color: #808080;
  line-height: 13px;
  border-bottom: 1px solid #909090;
  margin-bottom: 6px;
}

.box {
  border: 1px solid #808080;
  box-sizing: border-box;
  padding: 1px 0 0 1px;
  display: flex;
  flex-direction: column;
}

.sec-1 .box { height: 81px; }
.sec-2 .box { height: 256px; }
.sec-3 .box { height: 100px; }
.sec-4 .box { height: 107px; }

.gh {
  height: 24px;
  flex: none;
}

.grid-a {
  display: grid;
  grid-template-columns: 20px 76px 71px 136px 89px 178px 77px 210px 109px 78px 99px 78px 108px;
}

.grid-b {
  display: grid;
  grid-template-columns: 20px 76px 50px 241px 215px 120px 95px 116px 115px 76px 77px 106px;
  width: fit-content;
}

.grid-c {
  display: grid;
  grid-template-columns: 20px 90px 24px 23px 21px 21px 21px 21px 20px 20px 24px 23px 26px 23px 22px 22px 21px 77px 74px 113px 107px 110px 106px 77px 123px 142px 78px;
  width: fit-content;
}

.gth {
  padding-left: 6px;
  padding-right: 2px;
  line-height: 23px;
  border-right: 1px solid #ececec;
  white-space: nowrap;
}

.grid-a .gth {
  line-height: 24px;
}

.grid-a .gth + .gth {
  padding-left: 7px;
}

.gth.r,
.grid-a .gth.r {
  text-align: right;
  padding-right: 4px;
  padding-left: 0;
}

.gth.mid {
  padding: 0;
}

.box-body {
  flex: 1;
  min-height: 0;
  display: flex;
}

.box-left {
  flex: 1;
  min-width: 0;
  display: flex;
  flex-direction: column;
}

.box-rows {
  flex: 1;
}

.box-left .hs {
  width: 100%;
}

.gr {
  height: 21px;
}

.gr-on .gc {
  background: #e6e6e6;
  border-right-color: #fff;
}

.gr-on .gq {
  border-right-color: #eeeeee;
}

.rh-dark {
  background: #c8c8c8;
}

.gc {
  padding-left: 4px;
  line-height: 18px;
  border-right: 1px solid #e6e6e6;
  border-bottom: 2px solid #f0f0f0;
  white-space: nowrap;
  height: 21px;
  box-sizing: border-box;
}

.grid-c .gc {
  line-height: 17px;
}

.gc.mid {
  padding-left: 0;
}

.gc.r {
  text-align: right;
  padding: 0 2px 0 0;
}

.gr-on .gc-cur,
.grid-c.gr-on .gc-cur {
  background: #fff;
  border: 1px solid #a0a0a0;
  border-top-width: 2px;
  line-height: 15px;
  padding-left: 2px;
}

.gb {
  font-weight: bold;
}

.gr-on .gr-dgrn {
  background: #53bd5b;
}

.gr-grn {
  background: #33cc33;
}

.dash {
  display: inline-block;
  width: 57px;
  border-top: 1px solid #bdbdbd;
  vertical-align: middle;
}

.dash-s {
  width: 38px;
}

.tools {
  display: flex;
  flex-direction: column;
  gap: 12px;
  margin-left: 13px;
  padding-top: 5px;
}

.tools svg {
  width: 16px;
  height: 16px;
}

/* right side panel */
.side {
  width: 149px;
  flex: none;
  background: #f0f0f0;
  border-left: 3px double #c4c4c4;
  padding-top: 2px;
  margin-right: -2px;
}

.side-btn {
  height: 22px;
  line-height: 22px;
  position: relative;
  width: 129px;
  text-align: center;
  white-space: nowrap;
}

.tri {
  position: absolute;
  left: 134px;
  top: 8px;
}

.side-sep {
  border-top: 1px solid #a0a0a0;
  margin: 1px 21px 6px 2px;
}

.split-bottom {
  height: 3px;
  background: #e0e0e0;
  border-bottom: 1px solid #8a8a8a;
}

.doctabs {
  height: 25px;
  display: flex;
  align-items: center;
  font-family: "Open Sans", sans-serif;
  font-size: 11.500px;
  position: relative;
}

.dt {
  display: flex;
  align-items: center;
  gap: 4px;
  height: 21px;
  box-sizing: border-box;
  padding: 0 0 1px 5px;
  width: 122px;
  white-space: nowrap;
}

.dt svg {
  width: 16px;
  height: 17px;
}

.dt-on {
  width: 119px;
  background: #cce4f7;
  border: 1px solid #8ec1ea;
  padding: 0 0 0 4px;
  gap: 3px;
}

.dt-v {
  width: 120px;
  padding-left: 4px;
}

.dt-b {
  padding-left: 4px;
}

.statusbar {
  height: 24px;
  box-sizing: border-box;
  display: flex;
  align-items: center;
  background: #f0f0f0;
  border-top: 2px solid #dcdcdc;
  font-family: "Open Sans", sans-serif;
  font-size: 11.500px;
}

.sbar {
  height: 100%;
  box-sizing: border-box;
  border-right: 1px solid #d8d8d8;
  line-height: 22px;
  text-align: center;
}

.sbar-a {
  width: 20px;
}

.sbar-n {
  width: 30px;
}

.sbar-m {
  width: 250px;
  text-align: left;
  padding-left: 4px;
}

/* window on top of the lower right corner */
.overlay {
  position: absolute;
  left: 1644px;
  top: 825px;
  right: 0;
  bottom: 0;
  background: #fff;
  border-top: 1px solid #000;
  border-left: 1px solid #000;
}
```
